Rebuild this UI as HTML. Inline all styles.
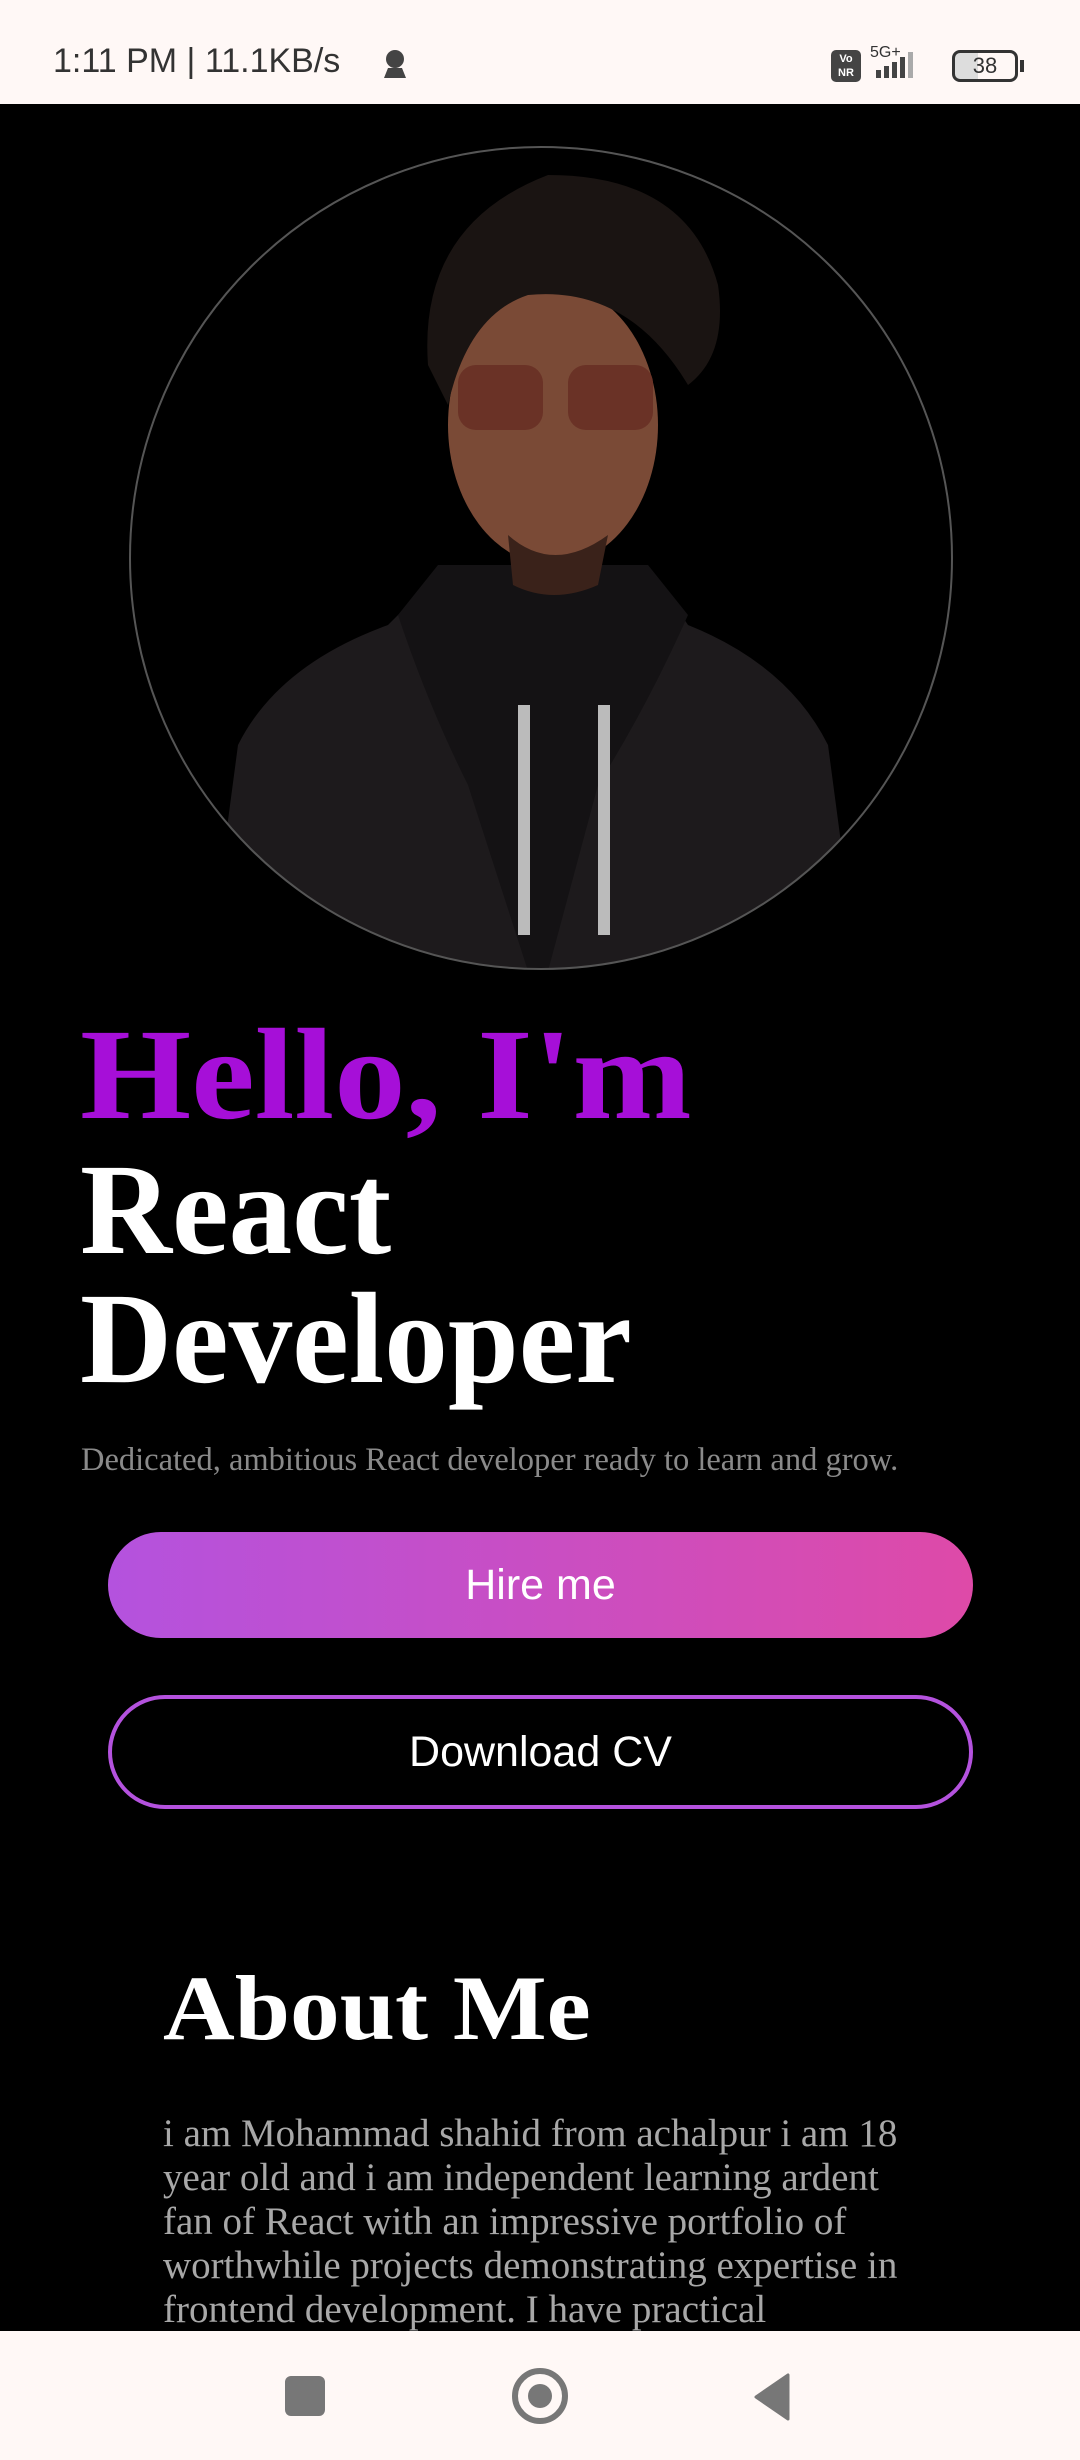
<!DOCTYPE html>
<html><head><meta charset="utf-8"><style>
*{margin:0;padding:0;box-sizing:border-box}
body{width:1080px;height:2460px;background:#000;position:relative;overflow:hidden;font-family:"Liberation Serif",serif}
.sb{position:absolute;left:0;top:0;width:1080px;height:104px;background:#fff8f6;font-family:"Liberation Sans",sans-serif;color:#333}
.abs{position:absolute}
.h{position:absolute;left:80px;font-weight:bold;font-size:130px;line-height:130px;white-space:nowrap;transform-origin:left top}
.btn{position:absolute;left:108px;width:865px;border-radius:60px;color:#fff;font-family:"Liberation Sans",sans-serif;font-size:43px;display:flex;align-items:center;justify-content:center}
.p{position:absolute;left:163px;top:2112px;width:765px;font-size:39px;line-height:44px;color:#a8a8a8}
.nav{position:absolute;left:0;top:2331px;width:1080px;height:129px;background:#fff8f6}
</style></head><body>
<div class="sb">
 <div class="abs" style="left:53px;top:42px;font-size:34px;">1:11 PM | 11.1KB/s</div>
 <svg class="abs" style="left:380px;top:48px" width="30" height="32" viewBox="0 0 30 32"><circle cx="15" cy="11" r="9" fill="#444"/><path d="M4 30 L8 20 H22 L26 30 Z" fill="#444"/></svg>
 <div class="abs" style="left:831px;top:50px;width:30px;height:32px;background:#444;border-radius:5px;color:#fff;font-size:11px;line-height:14px;text-align:center;padding-top:2px;font-weight:bold">Vo<br>NR</div>
 <div class="abs" style="left:870px;top:44px;font-size:16px;">5G+</div>
 <svg class="abs" style="left:870px;top:52px" width="70" height="28"><rect x="6" y="18" width="5" height="8" fill="#444"/><rect x="14" y="14" width="5" height="12" fill="#444"/><rect x="22" y="10" width="5" height="16" fill="#444"/><rect x="30" y="5" width="5" height="21" fill="#444"/><rect x="38" y="0" width="5" height="26" fill="#aaa"/></svg>
 <div class="abs" style="left:952px;top:50px;width:66px;height:32px;border:3px solid #333;border-radius:8px;font-size:22px;text-align:center;line-height:26px;background:linear-gradient(90deg,#ddd 38%,#fff8f6 38%)">38</div>
 <div class="abs" style="left:1020px;top:60px;width:4px;height:12px;background:#333"></div>
</div>

<svg class="abs" style="left:128px;top:145px" width="826" height="826" viewBox="0 0 826 826">
 <defs><clipPath id="c"><circle cx="413" cy="413" r="411"/></clipPath></defs>
 <g clip-path="url(#c)">
  <path d="M80 826 L110 600 Q150 520 260 480 L290 450 L540 450 L560 480 Q660 520 700 600 L730 826 Z" fill="#1d1a1c"/>
  <path d="M270 470 Q300 560 340 640 L400 826 L420 826 L470 640 Q520 560 560 470 L520 420 L310 420 Z" fill="#141214"/>
  <rect x="390" y="560" width="12" height="230" fill="#bbb"/><rect x="470" y="560" width="12" height="230" fill="#bbb"/>
  <ellipse cx="425" cy="280" rx="105" ry="140" fill="#7a4a36"/>
  <path d="M300 220 Q290 80 420 30 Q560 30 590 140 Q600 210 560 240 Q500 140 400 150 Q340 170 320 260 Z" fill="#1a1412"/>
  <rect x="330" y="220" width="85" height="65" rx="18" fill="#6a3226"/><rect x="440" y="220" width="85" height="65" rx="18" fill="#6a3226"/>
  <path d="M380 390 Q425 430 480 390 L470 440 Q425 460 385 440 Z" fill="#3a221a"/>
 </g>
 <circle cx="413" cy="413" r="411" fill="none" stroke="#555" stroke-width="2"/>
</svg>

<div class="h" style="top:1010px;color:#a60fd8;transform:scaleX(1.1)">Hello, I'm</div>
<div class="h" style="top:1145px;color:#fff;transform:scaleX(0.98)">React</div>
<div class="h" style="top:1274px;color:#fff;transform:scaleX(0.98)">Developer</div>
<div class="abs" style="left:81px;top:1442px;font-size:32.5px;color:#8a8a8a;white-space:nowrap">Dedicated, ambitious React developer ready to learn and grow.</div>

<div class="btn" style="top:1532px;height:106px;background:linear-gradient(90deg,#b452de,#de4aa8)">Hire me</div>
<div class="btn" style="top:1695px;height:114px;border:4px solid #b452de">Download CV</div>

<div class="abs" style="left:163px;top:1955px;font-size:92px;font-weight:bold;color:#fff;white-space:nowrap;transform:scaleX(1.08);transform-origin:left top">About Me</div>
<div class="p">i am Mohammad shahid from achalpur i am 18 year old and i am independent learning ardent fan of React with an impressive portfolio of worthwhile projects demonstrating expertise in frontend development. I have practical experience</div>

<div class="nav">
 <div class="abs" style="left:285px;top:45px;width:40px;height:40px;background:#777;border-radius:6px"></div>
 <div class="abs" style="left:512px;top:37px;width:56px;height:56px;border:6px solid #777;border-radius:50%"></div>
 <div class="abs" style="left:528px;top:53px;width:24px;height:24px;background:#777;border-radius:50%"></div>
 <svg class="abs" style="left:752px;top:42px" width="40" height="48"><path d="M36 2 L36 46 L4 24 Z" fill="#777" stroke="#777" stroke-linejoin="round" stroke-width="3"/></svg>
</div>
</body></html>
